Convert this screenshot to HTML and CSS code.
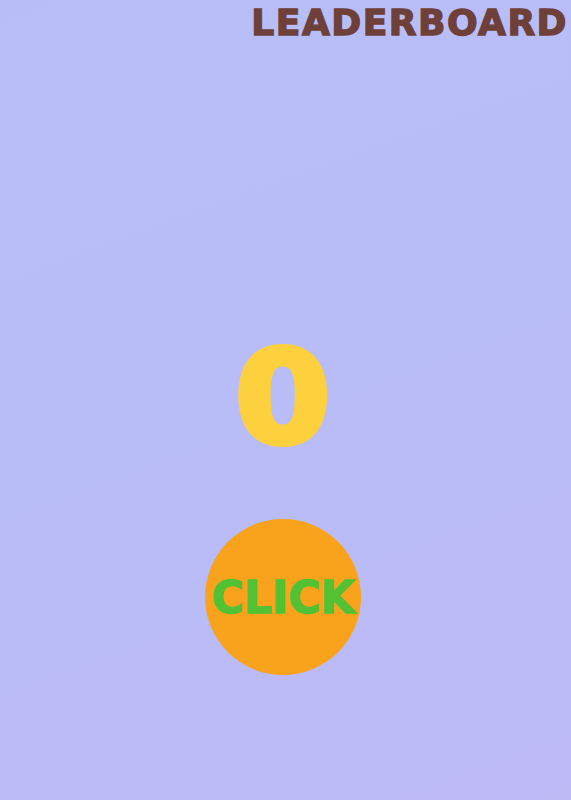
FILE: index.html
```html
<!DOCTYPE html>
<html lang="en">
<head>
    <meta charset="UTF-8">
    <meta name="viewport" content="width=device-width, initial-scale=1.0">
    <title>Clicker</title>
    <link rel="stylesheet" href="styles.css">
</head>
<body>

<header class="top-bar">
    <a href="#" class="leaderboard-link">LEADERBOARD</a>
</header>

<main class="game">
    <div id="score" class="score">0</div>
    <button id="clickBtn" class="click-btn">CLICK</button>
</main>

<script>
    // Count clicks
    let score = 0;
    document.getElementById('clickBtn').addEventListener('click', function() {
        score++;
        document.getElementById('score').textContent = score;
    });
</script>

</body>
</html>
```

FILE: styles.css
```css
html, body {
    height: 100%;
}
body {
    margin: 0;
    font-family: "DejaVu Sans", sans-serif;
    font-weight: bold;
    background: linear-gradient(160deg, #b7bef7 0%, #b9bcf7 60%, #bdbaf6 100%);
    overflow: hidden;
}
.top-bar {
    display: flex;
    justify-content: flex-end;
    padding: 1px 4px 0 0;
}
.leaderboard-link {
    color: #6e4039;
    font-size: 36px;
    line-height: 44px;
    text-decoration: none;
    letter-spacing: 1.5px;
    margin-right: -1px;
    -webkit-text-stroke: 1.4px #6e4039;
}
.game {
    display: flex;
    flex-direction: column;
    align-items: center;
    padding-right: 5px;
}
.score {
    margin-top: 273px;
    color: #fdd03e;
    font-size: 128px;
    line-height: 160px;
    transform: scaleX(1.07);
    -webkit-text-stroke: 6px #fdd03e;
}
.click-btn {
    margin-top: 41px;
    width: 156px;
    height: 156px;
    border: none;
    border-radius: 50%;
    background-color: #f9a31c;
    color: #52c234;
    font-family: "DejaVu Sans", sans-serif;
    font-weight: bold;
    font-size: 44px;
    padding: 0;
    cursor: pointer;
    -webkit-text-stroke: 1.4px #52c234;
}
```
